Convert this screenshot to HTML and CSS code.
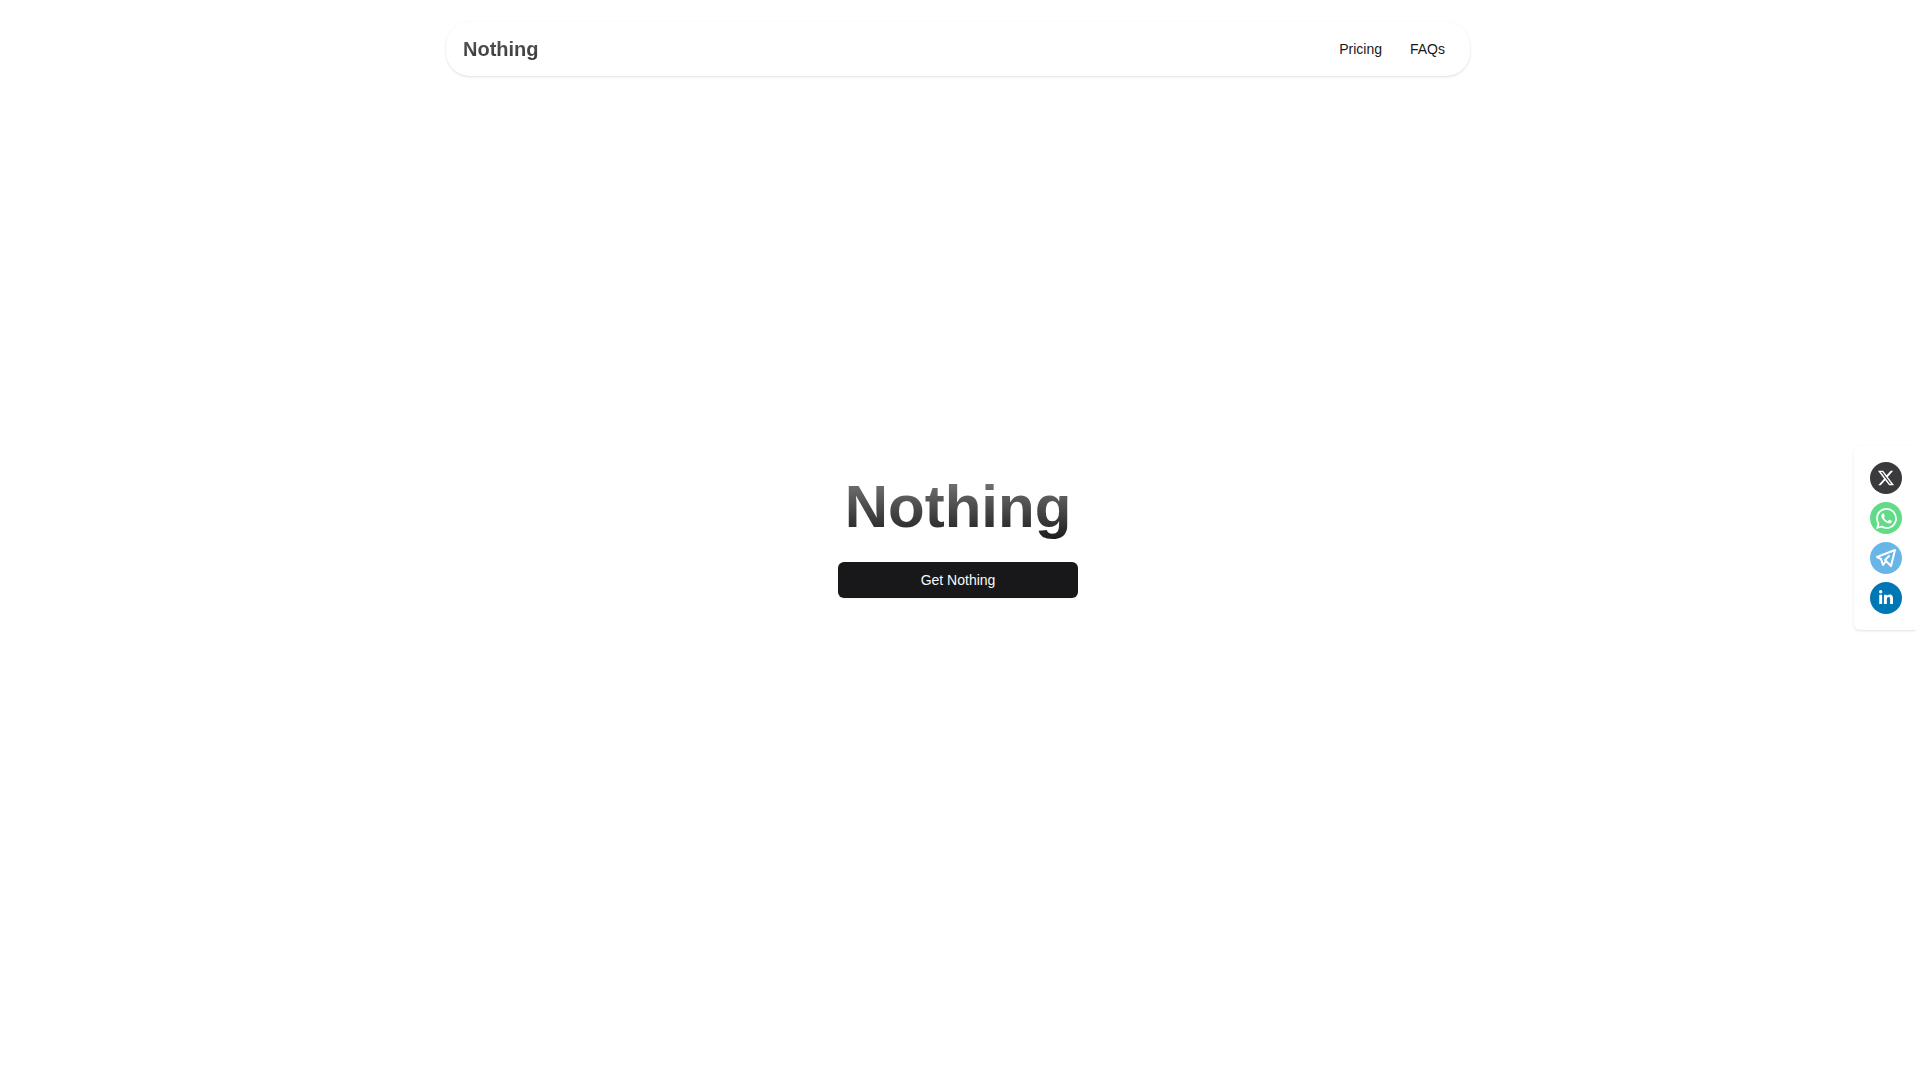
FILE: index.html
```html
<!DOCTYPE html>
<html lang="en">
<head>
    <meta charset="UTF-8">
    <meta name="viewport" content="width=device-width, initial-scale=1.0">
    <title>Nothing</title>
    <link rel="stylesheet" href="styles.css">
</head>
<body>
    <div class="page">
        <nav class="navbar">
            <a class="brand" href="#">Nothing</a>
            <div class="nav-links">
                <a href="#">Pricing</a>
                <a href="#">FAQs</a>
            </div>
        </nav>

        <main class="hero">
            <h1>Nothing</h1>
            <button class="cta">Get Nothing</button>
        </main>
    </div>

    <!-- share buttons -->
    <aside class="share-panel">
        <a class="share-btn share-x" href="#" aria-label="X">
            <svg viewBox="0 0 24 24" width="18" height="18" fill="currentColor"><path d="M18.244 2.25h3.308l-7.227 8.26 8.502 11.24H16.17l-5.214-6.817L4.99 21.75H1.68l7.73-8.835L1.254 2.25H8.08l4.713 6.231zm-1.161 17.52h1.833L7.084 4.126H5.117z"/></svg>
        </a>
        <a class="share-btn share-whatsapp" href="#" aria-label="WhatsApp">
            <svg viewBox="0 0 24 24" width="21" height="21" fill="currentColor"><path d="M17.472 14.382c-.297-.149-1.758-.867-2.03-.967-.273-.099-.471-.148-.67.15-.197.297-.767.966-.94 1.164-.173.199-.347.223-.644.075-.297-.15-1.255-.463-2.39-1.475-.883-.788-1.48-1.761-1.653-2.059-.173-.297-.018-.458.13-.606.134-.133.298-.347.446-.52.149-.174.198-.298.298-.497.099-.198.05-.371-.025-.52-.075-.149-.669-1.612-.916-2.207-.242-.579-.487-.5-.669-.51-.173-.008-.371-.01-.57-.01-.198 0-.52.074-.792.372-.272.297-1.04 1.016-1.04 2.479 0 1.462 1.065 2.875 1.213 3.074.149.198 2.096 3.2 5.077 4.487.709.306 1.262.489 1.694.625.712.227 1.36.195 1.871.118.571-.085 1.758-.719 2.006-1.413.248-.694.248-1.289.173-1.413-.074-.124-.272-.198-.57-.347m-5.421 7.403h-.004a9.87 9.87 0 01-5.031-1.378l-.361-.214-3.741.982.998-3.648-.235-.374a9.86 9.86 0 01-1.51-5.26c.001-5.45 4.436-9.884 9.888-9.884 2.64 0 5.122 1.03 6.988 2.898a9.825 9.825 0 012.893 6.994c-.003 5.45-4.437 9.884-9.885 9.884m8.413-18.297A11.815 11.815 0 0012.05 0C5.495 0 .16 5.335.157 11.892c0 2.096.547 4.142 1.588 5.945L.057 24l6.305-1.654a11.882 11.882 0 005.683 1.448h.005c6.554 0 11.89-5.335 11.893-11.893a11.821 11.821 0 00-3.48-8.413z"/></svg>
        </a>
        <a class="share-btn share-telegram" href="#" aria-label="Telegram">
            <svg viewBox="0 0 24 24" width="24" height="24" fill="none" stroke="currentColor" stroke-width="2" stroke-linecap="round" stroke-linejoin="round"><path d="M15 10l-4 4l6 6l4 -16l-18 7l4 2l2 6l3 -4"/></svg>
        </a>
        <a class="share-btn share-linkedin" href="#" aria-label="LinkedIn">
            <svg viewBox="0 0 448 512" width="14" height="16" fill="currentColor"><path d="M100.3 448H7.4V148.9h92.9zM53.8 108.1C24.1 108.1 0 83.5 0 53.8a53.8 53.8 0 0 1 107.6 0c0 29.7-24.1 54.3-53.8 54.3zM447.9 448h-92.7V302.4c0-34.7-.7-79.2-48.3-79.2-48.3 0-55.7 37.7-55.7 76.7V448h-92.8V148.9h89.1v40.8h1.3c12.4-23.5 42.7-48.3 87.9-48.3 94 0 111.3 61.9 111.3 142.3V448z"/></svg>
        </a>
    </aside>
</body>
</html>
```

FILE: styles.css
```css
:root {
    --text-color: #18181b;
}

* {
    box-sizing: border-box;
}

body {
    font-family: 'Liberation Sans', Arial, sans-serif;
    background-color: #fff;
    color: var(--text-color);
    margin: 0;
}

a {
    color: inherit;
    text-decoration: none;
}

.page {
    min-height: 100vh;
    display: flex;
    flex-direction: column;
    align-items: center;
    padding-top: 22px;
}

.navbar {
    width: 1024px;
    height: 54px;
    display: flex;
    justify-content: space-between;
    align-items: center;
    padding: 0 25px 0 17px;
    background-color: #fff;
    border-radius: 24px;
    box-shadow: 0 1px 3px rgba(0, 0, 0, 0.1), 0 1px 2px -1px rgba(0, 0, 0, 0.1);
}

.brand {
    font-size: 20px;
    font-weight: bold;
    background: linear-gradient(to bottom, #5c5c5c, #333);
    -webkit-background-clip: text;
    background-clip: text;
    color: transparent;
}

.nav-links {
    display: flex;
    gap: 28px;
    font-size: 14px;
}

.hero {
    flex: 1;
    display: flex;
    flex-direction: column;
    align-items: center;
    padding-top: 395px;
}

h1 {
    margin: 0 0 19px;
    font-size: 60px;
    line-height: 72px;
    font-weight: bold;
    background: linear-gradient(to bottom, #828282, #171717);
    -webkit-background-clip: text;
    background-clip: text;
    color: transparent;
}

.cta {
    width: 240px;
    height: 36px;
    font-family: inherit;
    font-size: 14px;
    color: #fafafa;
    background-color: #18181b;
    border: none;
    border-radius: 6px;
    box-shadow: 0 1px 2px rgba(0, 0, 0, 0.05);
    cursor: pointer;
}

.share-panel {
    position: fixed;
    right: 0;
    top: 446px;
    display: flex;
    flex-direction: column;
    gap: 8px;
    padding: 16px 14px 16px 16px;
    background-color: #fff;
    border-radius: 6px 0 0 6px;
    box-shadow: 0 1px 3px rgba(0, 0, 0, 0.1), 0 1px 2px -1px rgba(0, 0, 0, 0.1);
}

.share-btn {
    width: 32px;
    height: 32px;
    display: flex;
    justify-content: center;
    align-items: center;
    border-radius: 50%;
    color: #fff;
}

.share-x {
    background-color: #3a3a3c;
}

.share-whatsapp {
    background-color: #60dc88;
}

.share-telegram {
    background-color: #68b5e8;
}

.share-linkedin {
    background-color: #0077b5;
}
```
